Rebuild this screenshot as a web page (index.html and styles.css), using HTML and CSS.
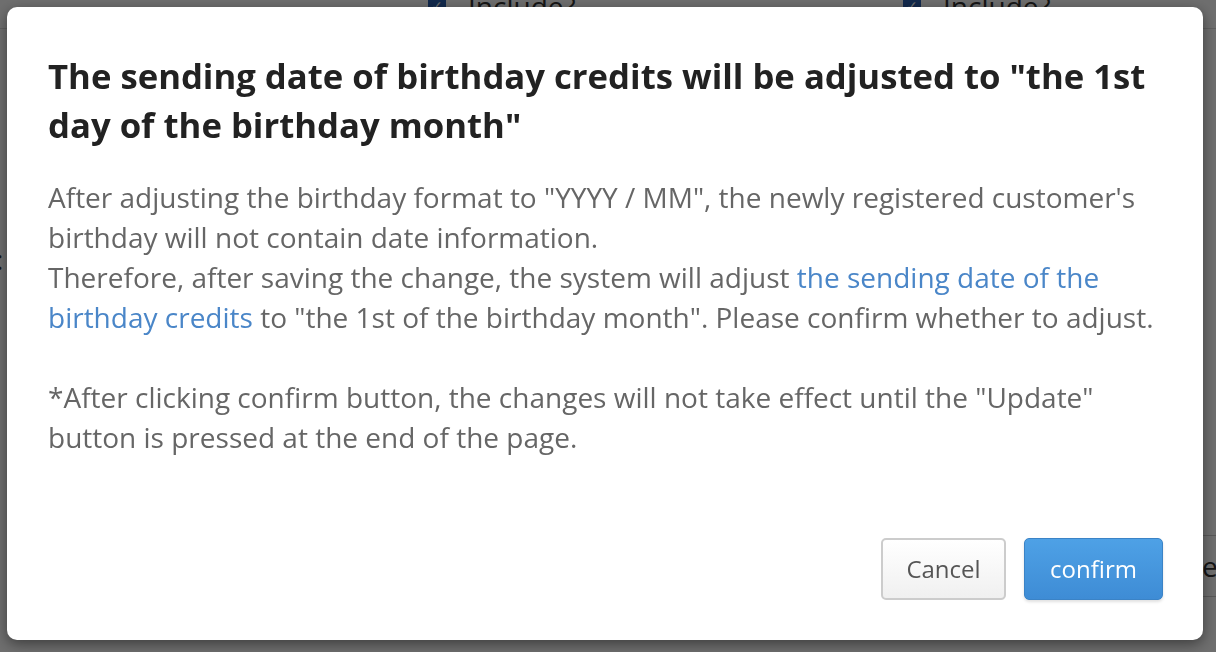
FILE: index.html
```html
<!DOCTYPE html>
<html lang="en">
<head>
    <meta charset="UTF-8">
    <title>Birthday credits</title>
    <link rel="stylesheet" href="styles.css">
</head>
<body>

    <div class="page">
        <div class="page-top">
            <label class="include"><span class="check">&#10003;</span> Include?</label>
            <label class="include"><span class="check">&#10003;</span> Include?</label>
        </div>
        <div class="page-left">:</div>
        <div class="page-right">e</div>
    </div>

    <div class="overlay">
        <div class="modal">
            <h2 class="modal-title">The sending date of birthday credits will be adjusted to "the 1st day of the birthday month"</h2>
            <p class="modal-text">
                After adjusting the birthday format to "YYYY / MM", the newly registered customer's birthday will not contain date information.<br>
                Therefore, after saving the change, the system will adjust <a href="#" class="link">the sending date of the birthday credits</a> to "the 1st of the birthday month". Please confirm whether to adjust.<br>
                <br>
                *After clicking confirm button, the changes will not take effect until the "Update" button is pressed at the end of the page.
            </p>
            <div class="modal-actions">
                <button class="btn btn-cancel">Cancel</button>
                <button class="btn btn-confirm">confirm</button>
            </div>
        </div>
    </div>

</body>
</html>
```

FILE: styles.css
```css
body {
    margin: 0;
    padding: 0;
    font-family: "Open Sans", Arial, sans-serif;
    background-color: #fff;
    width: 1216px;
    height: 652px;
    overflow: hidden;
}

/* page behind the dialog */
.page {
    position: relative;
    height: 652px;
    overflow: hidden;
    color: #333;
    font-size: 28px;
}
.page-top {
    display: flex;
    padding-left: 428px;
    margin-top: -16px;
    border-bottom: 1px solid #ddd;
    height: 44px;
}
.include {
    display: flex;
    align-items: center;
    gap: 22px;
    width: 475px;
    flex-shrink: 0;
}
.check {
    display: inline-block;
    width: 18px;
    height: 18px;
    background-color: #2a5fb0;
    color: white;
    font-size: 14px;
    line-height: 18px;
    text-align: center;
    border-radius: 3px;
}
.page-left {
    position: absolute;
    left: -4px;
    top: 240px;
    font-size: 28px;
}
.page-right {
    position: absolute;
    right: -6px;
    top: 535px;
    height: 60px;
    line-height: 60px;
    width: 20px;
    border-top: 1px solid #ccc;
    border-bottom: 1px solid #ccc;
}

/* dialog */
.overlay {
    position: fixed;
    top: 0;
    left: 0;
    right: 0;
    bottom: 0;
    background-color: rgba(0, 0, 0, 0.57);
    display: flex;
    align-items: flex-start;
    justify-content: flex-start;
    padding: 7px 0 0 7px;
}
.modal {
    width: 1196px;
    height: 633px;
    box-sizing: border-box;
    background-color: white;
    border-radius: 10px;
    box-shadow: 0 4px 14px rgba(0, 0, 0, 0.45);
    padding: 44px 40px 40px 41px;
    display: flex;
    flex-direction: column;
}
.modal-title {
    margin: 0;
    font-size: 34.7px;
    line-height: 49px;
    font-weight: 700;
    color: #222;
}
.modal-text {
    margin: 28px 0 0 0;
    font-size: 28px;
    line-height: 40px;
    color: #666;
}
.link {
    color: #4a86c8;
    text-decoration: none;
}
.modal-actions {
    margin-top: auto;
    display: flex;
    justify-content: flex-end;
    gap: 18px;
}
.btn {
    height: 62px;
    padding: 0 0 2px 0;
    font-family: "Open Sans", Arial, sans-serif;
    font-size: 24px;
    border-radius: 5px;
    cursor: pointer;
    box-sizing: border-box;
}
.btn-cancel {
    width: 125px;
    color: #555;
    background: linear-gradient(#fff, #f0f0f0);
    border: 2px solid #ccc;
}
.btn-confirm {
    width: 139px;
    color: white;
    background: linear-gradient(#4ea1e6, #3e8cd5);
    border: 1px solid #3b83c6;
    box-shadow: 0 2px 3px rgba(0, 0, 0, 0.12);
}
```
